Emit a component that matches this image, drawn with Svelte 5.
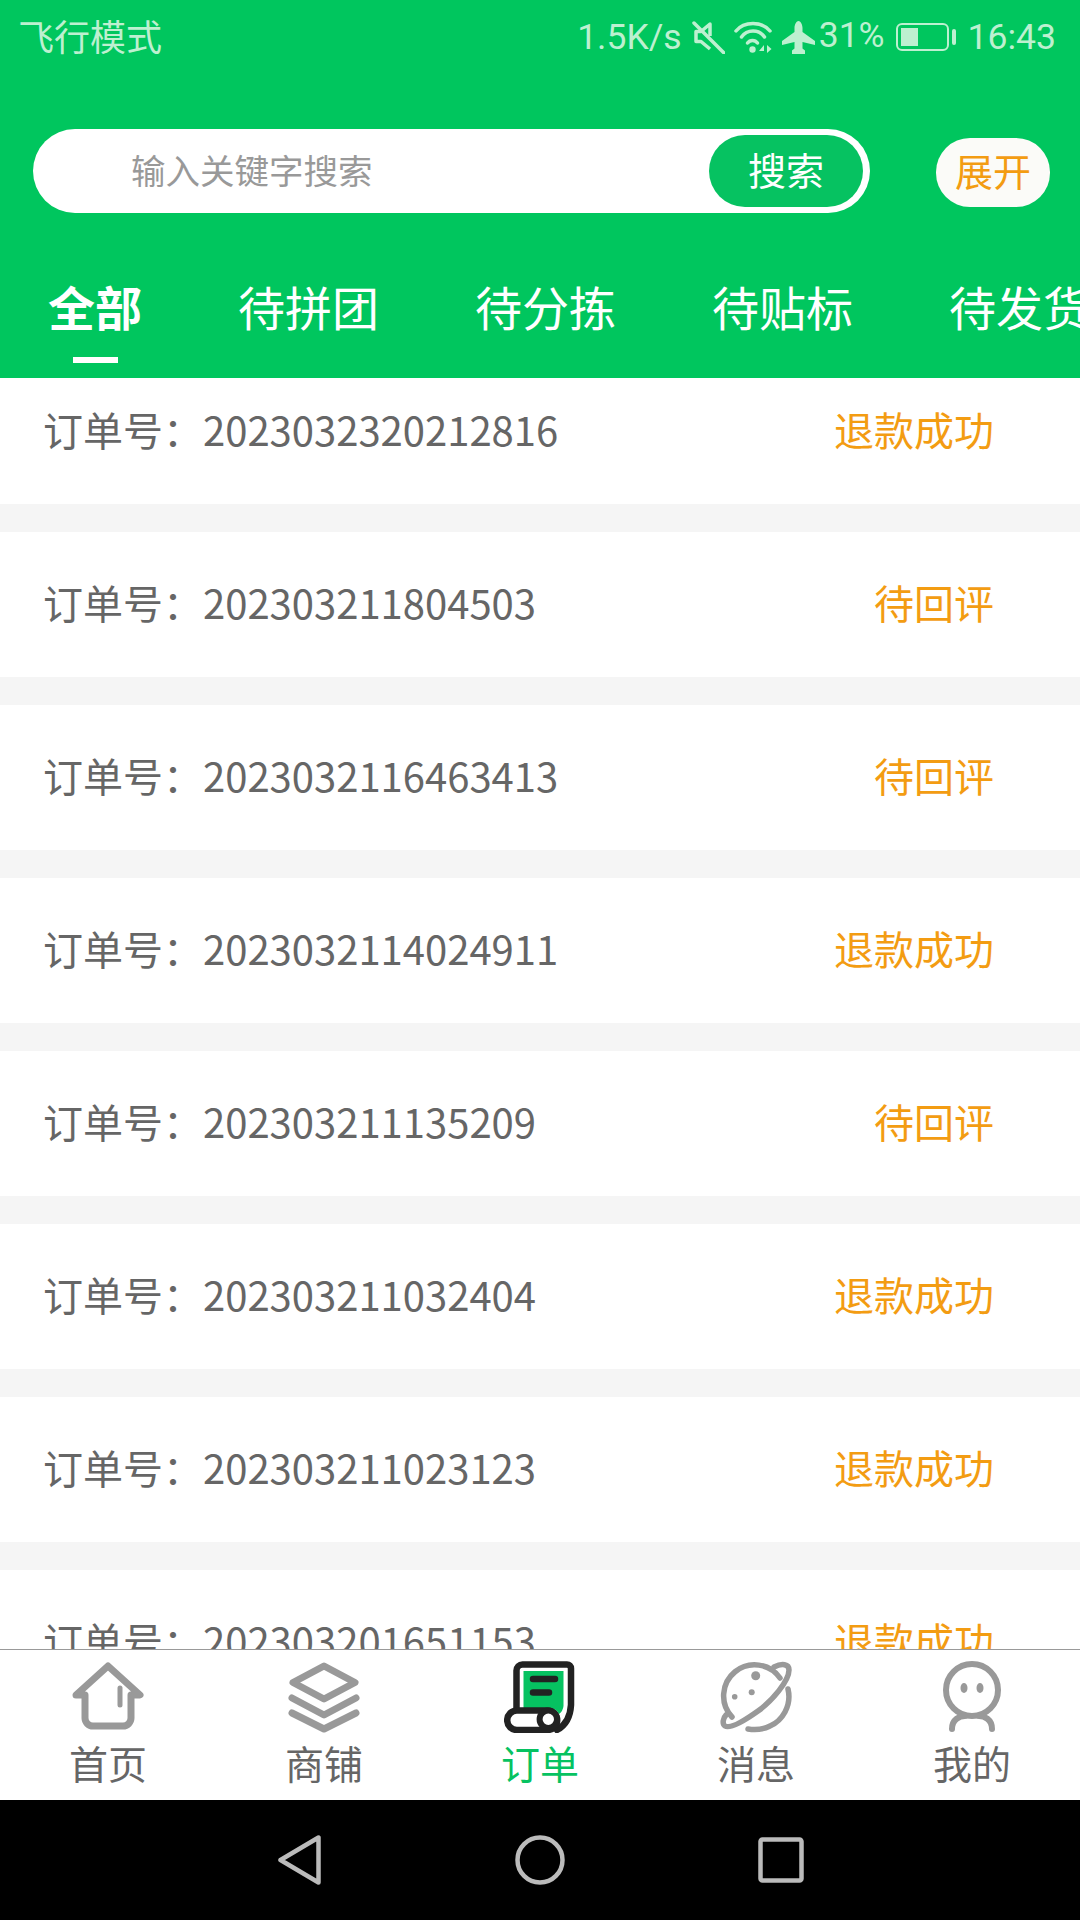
<script lang="ts">
  const tabs = ["全部", "待拼团", "待分拣", "待贴标", "待发货"];

  const orders = [
    { no: "2023032320212816", status: "退款成功" },
    { no: "202303211804503", status: "待回评" },
    { no: "2023032116463413", status: "待回评" },
    { no: "2023032114024911", status: "退款成功" },
    { no: "202303211135209", status: "待回评" },
    { no: "202303211032404", status: "退款成功" },
    { no: "202303211023123", status: "退款成功" },
    { no: "202303201651153", status: "退款成功" },
  ];

  const navItems = ["首页", "商铺", "订单", "消息", "我的"];
</script>

<div class="page">
  <header class="header">
    <div class="status-bar">
      <span class="carrier">飞行模式</span>
      <div class="status-right">
        <span class="speed">1.5K/s</span>
        <svg class="ic-mute" viewBox="0 0 33 33" width="33" height="33" fill="none" stroke="currentColor" stroke-width="3.500">
          <path d="M18 15 V3 L9 10.500 H4 V20.500 H9 L18 28" stroke-linejoin="round" />
          <path d="M2 2 L32 32" stroke-linecap="round" />
        </svg>
        <svg class="ic-wifi" viewBox="0 0 39 33" width="39" height="33" fill="none" stroke="currentColor" stroke-width="3.500" stroke-linecap="round">
          <path d="M2 10 C10 0 28 0 36 10" />
          <path d="M7.500 16 C13 8 25 8 30.500 16" />
          <path d="M13.500 22 C16 18.500 21 18.500 23.500 22" />
          <circle cx="18.500" cy="28.500" r="3.200" fill="currentColor" stroke="none" />
          <path d="M30 24 L25 30 H30 Z M33 24 V32 L37.500 28 Z" fill="currentColor" stroke="none" />
        </svg>
        <svg class="ic-plane" viewBox="0 0 33 33" width="33" height="33" fill="currentColor">
          <path d="M16.500 0 C14 0 12.500 4 12.500 7 V11 L0 20 V24 L12.500 21 V27.500 L10 29.500 V33 H23 V29.500 L20.500 27.500 V21 L33 24 V20 L20.500 11 V7 C20.500 4 19 0 16.500 0 Z" />
        </svg>
        <span class="percent">31%</span>
        <div class="battery"><div class="battery-level"></div></div>
        <div class="battery-nub"></div>
        <span class="time">16:43</span>
      </div>
    </div>

    <div class="search-row">
      <div class="search-box">
        <span class="placeholder">输入关键字搜索</span>
        <button class="search-btn"><span>搜索</span></button>
      </div>
      <button class="expand-btn"><span>展开</span></button>
    </div>

    <div class="tabs">
      {#each tabs as tab, i}
        <div class="tab" class:active={i === 0}>
          <span class="tab-label">{tab}</span>
          <span class="tab-line"></span>
        </div>
      {/each}
    </div>
  </header>

  <main class="list">
    <div class="list-inner">
      {#each orders as order}
        <div class="order">
          <span class="order-no">订单号：{order.no}</span>
          <span class="order-status">{order.status}</span>
        </div>
      {/each}
    </div>
  </main>

  <nav class="tabbar">
    {#each navItems as item, i}
      <div class="tabbar-item" class:current={i === 2}>
        <div class="tabbar-icon">
          {#if i === 0}
            <svg viewBox="0 0 72 72" width="72" height="72" fill="none" stroke="#999" stroke-width="7" stroke-linejoin="round" stroke-linecap="round">
              <path d="M4 34 L36 5 L68 34 H59 V57 A8 8 0 0 1 51 65 H21 A8 8 0 0 1 13 57 V34 Z" />
              <path d="M48 27 V44" stroke-width="5" />
            </svg>
          {:else if i === 1}
            <svg viewBox="0 0 72 72" width="72" height="72" fill="none" stroke="#999" stroke-width="7" stroke-linejoin="round" stroke-linecap="round">
              <path d="M36 5 L67 21.500 L36 38 L5 21.500 Z" />
              <path d="M4 37 L36 54 L68 37" />
              <path d="M4 52 L36 68 L68 52" />
            </svg>
          {:else if i === 2}
            <svg viewBox="0 0 72 72" width="72" height="72" fill="none" stroke="#222" stroke-width="6.500" stroke-linejoin="round" stroke-linecap="round">
              <path d="M19.500 10 H59.500 V45 Q59 50 55 53 Q52 47 45 47 H19.500 Z" fill="#06c261" stroke="none" />
              <path d="M12.500 48 V9.500 A6 6 0 0 1 18.500 3.500 H63 A4 4 0 0 1 67 7.500 V44 Q66 62 53 69" />
              <path d="M29 18 H51 M29 31.500 H45" />
              <rect x="3.200" y="49.500" width="50" height="19.500" rx="9.700" fill="#fff" />
              <circle cx="44.300" cy="58.300" r="8.700" fill="#fff" stroke-width="6" />
            </svg>
          {:else if i === 3}
            <svg viewBox="0 0 72 72" width="72" height="72" fill="none" stroke="#999" stroke-width="5.500" stroke-linecap="round">
              <path d="M12 56 A31 31 0 1 1 60 17" />
              <path d="M54 6 C62 2 69 3 69 9 C69 20 52 40 38 50 C24 60 10 68 5 65 C2 63 3 57 6 54" />
              <path d="M68 28 C72 45 62 60 50 65 C42 69 34 69 28 68" />
              <circle cx="35.700" cy="14.700" r="4.500" fill="#999" stroke="none" />
              <circle cx="31.700" cy="31.300" r="3" fill="#999" stroke="none" />
              <circle cx="14.700" cy="35.700" r="2.800" fill="#999" stroke="none" />
            </svg>
          {:else}
            <svg viewBox="0 0 58 72" width="58" height="72" fill="none" stroke="#999" stroke-width="6" stroke-linecap="round">
              <circle cx="29" cy="29" r="26" />
              <ellipse cx="21" cy="27" rx="3.500" ry="5" fill="#999" stroke="none" />
              <ellipse cx="37" cy="27" rx="3.500" ry="5" fill="#999" stroke="none" />
              <path d="M9 68 C9 58 17 55 22 55 M49 68 C49 58 41 55 36 55" />
            </svg>
          {/if}
        </div>
        <span class="tabbar-label">{item}</span>
      </div>
    {/each}
  </nav>

  <div class="system-nav">
    <svg viewBox="0 0 43 50" width="43" height="50" fill="none" stroke="#bbb" stroke-width="4.500" stroke-linejoin="round">
      <path d="M40.500 2.500 V47.500 L2.500 25 Z" />
    </svg>
    <svg class="home" viewBox="0 0 50 50" width="50" height="50" fill="none" stroke="#bbb" stroke-width="4.500">
      <circle cx="25" cy="25" r="22.500" />
    </svg>
    <svg class="recent" viewBox="0 0 46 46" width="46" height="46" fill="none" stroke="#bbb" stroke-width="4.500" stroke-linejoin="round">
      <rect x="2.500" y="2.500" width="41" height="41" rx="2" />
    </svg>
  </div>
</div>

<style>
  :global(body) {
    margin: 0;
    background: #fff;
  }

  .page {
    display: flex;
    flex-direction: column;
    width: 1080px;
    height: 1920px;
    overflow: hidden;
    font-family: "Noto Sans CJK SC", "Noto Sans", sans-serif;
  }

  .header {
    flex: none;
    height: 378px;
    background: #00c65e;
    overflow: hidden;
  }

  .status-bar {
    display: flex;
    align-items: center;
    justify-content: space-between;
    height: 74px;
    padding: 0 24px 0 18px;
    color: #bdf0d0;
    font-family: Roboto, sans-serif;
    font-size: 35.500px;
  }

  .carrier {
    margin-bottom: 4px;
    font-size: 36px;
    font-family: "Noto Sans CJK SC", sans-serif;
  }

  .status-right {
    display: flex;
    align-items: center;
  }

  .ic-mute {
    margin-left: 10px;
  }

  .ic-wifi {
    margin-left: 9px;
  }

  .ic-plane {
    margin-left: 9px;
  }

  .percent {
    margin-left: 4px;
    margin-bottom: 4px;
  }

  .battery {
    box-sizing: border-box;
    width: 53px;
    height: 28px;
    margin-left: 11px;
    padding: 3px;
    border: 2px solid #bdf0d0;
    border-radius: 6px;
  }

  .battery-level {
    width: 17px;
    height: 100%;
    background: #bdf0d0;
  }

  .battery-nub {
    width: 4px;
    height: 16px;
    margin-left: 3px;
    background: #bdf0d0;
    border-radius: 2px;
  }

  .time {
    margin-left: 12px;
  }

  .search-row {
    display: flex;
    align-items: center;
    margin-top: 55px;
    padding-left: 33px;
  }

  .search-box {
    box-sizing: border-box;
    display: flex;
    align-items: center;
    justify-content: space-between;
    width: 837px;
    height: 84px;
    padding: 6px 7px 6px 98px;
    background: #fff;
    border-radius: 42px;
  }

  .placeholder {
    margin-bottom: 5px;
    font-size: 34.500px;
    color: #999;
  }

  .search-btn {
    width: 154px;
    height: 72px;
    padding: 0 0 5px;
    border: none;
    border-radius: 36px;
    background: #06c261;
    color: #fff;
    font-family: inherit;
    font-size: 38px;
  }

  .expand-btn {
    width: 114px;
    height: 69px;
    margin-top: 3px;
    margin-left: 66px;
    padding: 0 0 7px;
    border: none;
    border-radius: 34px;
    background: #fbfbf8;
    color: #f39c12;
    font-family: inherit;
    font-size: 38px;
  }

  .tabs {
    display: flex;
    gap: 96px;
    margin-top: 63px;
    padding-left: 48px;
    white-space: nowrap;
  }

  .tab {
    flex: none;
    display: flex;
    flex-direction: column;
    align-items: center;
    color: #fff;
  }

  .tab-label {
    font-size: 47px;
    line-height: 60px;
  }

  .tab-line {
    width: 45px;
    height: 6px;
    margin-top: 21px;
  }

  .tab.active .tab-label {
    font-weight: 700;
  }

  .tab.active .tab-line {
    background: #fff;
  }

  .list {
    flex: 1;
    min-height: 0;
    overflow: hidden;
    background: #f5f5f5;
  }

  .list-inner {
    display: flex;
    flex-direction: column;
    gap: 28px;
    margin-top: -19px;
  }

  .order {
    flex: none;
    box-sizing: border-box;
    display: flex;
    align-items: center;
    justify-content: space-between;
    height: 145px;
    padding: 0 86px 6px 43px;
    background: #fff;
    font-size: 40px;
  }

  .order-no {
    color: #666;
  }

  .order-status {
    color: #f39c12;
  }

  .tabbar {
    flex: none;
    display: grid;
    grid-template-columns: repeat(5, 1fr);
    height: 150px;
    border-top: 1px solid #999;
    background: #fff;
  }

  .tabbar-item {
    display: flex;
    flex-direction: column;
    align-items: center;
    padding-top: 11px;
    color: #666;
  }

  .tabbar-item.current {
    color: #06c261;
  }

  .tabbar-icon {
    display: flex;
    height: 72px;
  }

  .tabbar-label {
    margin-top: 4px;
    font-size: 39px;
    line-height: 50px;
  }

  .system-nav {
    flex: none;
    display: flex;
    align-items: center;
    height: 120px;
    padding-left: 278px;
    background: #000;
  }

  .home {
    margin-left: 194px;
  }

  .recent {
    margin-left: 193px;
  }
</style>
